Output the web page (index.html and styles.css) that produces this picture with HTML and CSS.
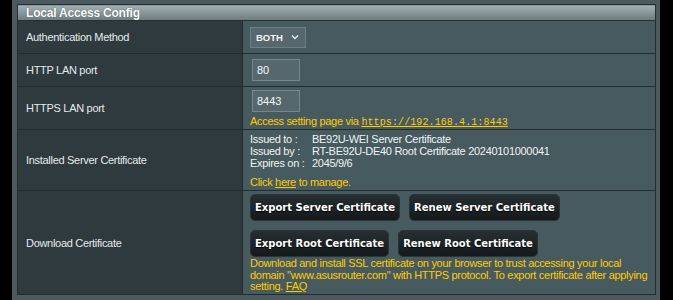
FILE: index.html
```html
<!DOCTYPE html>
<html lang="en">
<head>
    <meta charset="UTF-8">
    <meta name="viewport" content="width=device-width, initial-scale=1.0">
    <title>Local Access Config</title>
    <link rel="stylesheet" href="styles.css">
</head>
<body>
    <div id="moldura">
        <div class="faixa"></div>
        <div id="conteudo">
            <table class="tabela">
                <colgroup>
                    <col class="col-rotulo">
                    <col class="col-valor">
                </colgroup>
                <thead>
                    <tr><th colspan="2">Local Access Config</th></tr>
                </thead>
                <tbody>
                    <tr class="linha-1">
                        <td class="rotulo">Authentication Method</td>
                        <td class="valor">
                            <div class="seletor">
                                <span>BOTH</span>
                                <svg width="8" height="6" viewBox="0 0 8 6"><path d="M1 1.5 L4 4.5 L7 1.5" fill="none" stroke="#e6ecee" stroke-width="1.4"/></svg>
                            </div>
                        </td>
                    </tr>
                    <tr class="linha-2">
                        <td class="rotulo">HTTP LAN port</td>
                        <td class="valor"><div class="campo">80</div></td>
                    </tr>
                    <tr class="linha-3">
                        <td class="rotulo">HTTPS LAN port</td>
                        <td class="valor">
                            <div class="campo">8443</div>
                            <div class="aviso">Access setting page via <a class="url" href="#">https://192.168.4.1:8443</a></div>
                        </td>
                    </tr>
                    <tr class="linha-4">
                        <td class="rotulo">Installed Server Certificate</td>
                        <td class="valor">
                            <div class="certificado">
                                <span>Issued to :</span><span>BE92U-WEI Server Certificate</span>
                                <span>Issued by :</span><span>RT-BE92U-DE40 Root Certificate 20240101000041</span>
                                <span>Expires on :</span><span>2045/9/6</span>
                            </div>
                            <div class="aviso gerenciar">Click <a href="#">here</a> to manage.</div>
                        </td>
                    </tr>
                    <tr class="linha-5">
                        <td class="rotulo">Download Certificate</td>
                        <td class="valor">
                            <div class="botoes">
                                <button class="botao">Export Server Certificate</button>
                                <button class="botao">Renew Server Certificate</button>
                            </div>
                            <div class="botoes">
                                <button class="botao">Export Root Certificate</button>
                                <button class="botao">Renew Root Certificate</button>
                            </div>
                            <div class="aviso texto-longo">Download and install SSL certificate on your browser to trust accessing your local domain "www.asusrouter.com" with HTTPS protocol. To export certificate after applying setting. <a href="#">FAQ</a></div>
                        </td>
                    </tr>
                </tbody>
            </table>
        </div>
        <div class="faixa faixa-direita"></div>
    </div>
</body>
</html>
```

FILE: styles.css
```css
body {
    margin: 0;
    background-color: #000000;
    font-family: "Liberation Sans", Arial, sans-serif;
    color: #e8eef0;
}
#moldura {
    display: flex;
    height: 300px;
}
.faixa {
    width: 12px;
    background-color: #000000;
}
.faixa-direita {
    width: 13px;
}
#conteudo {
    width: 648px;
    background-color: #4c5a5f;
    padding: 4px 4px 0 5px;
    box-sizing: border-box;
}
.tabela {
    width: 639px;
    border-collapse: collapse;
    table-layout: fixed;
}
.col-rotulo {
    width: 225px;
}
.tabela th {
    height: 15px;
    padding: 0 0 0 8px;
    text-align: left;
    font-size: 12px;
    line-height: 14px;
    letter-spacing: -0.2px;
    font-weight: bold;
    color: #ffffff;
    text-shadow: 0 0 1px #3a464a;
    background: linear-gradient(#a3b0b4, #8a989d 45%, #6c7b80);
    border: 1px solid #27312f;
}
.tabela td {
    padding: 0;
    border: 1px solid #232c2f;
    font-size: 11px;
    letter-spacing: -0.3px;
    vertical-align: middle;
}
.tabela td.rotulo {
    padding-left: 8px;
    background-color: #2f3a3e;
    color: #e4eaec;
}
.tabela td.valor {
    padding-left: 7px;
    background-color: #475a5f;
}
.linha-1 td { height: 32px; }
.linha-2 td { height: 32px; }
.linha-3 td { height: 38px; }
.linha-4 td { height: 57px; }
.linha-5 td { height: 100px; }
.seletor {
    display: flex;
    align-items: center;
    justify-content: space-between;
    width: 56px;
    height: 21px;
    padding: 0 6px 0 5px;
    box-sizing: border-box;
    background-color: #56686d;
    border: 1px solid #6d7f84;
    font-size: 9.5px;
    font-weight: bold;
    letter-spacing: 0;
    color: #f2f6f7;
}
.campo {
    width: 48px;
    height: 22px;
    margin-left: 2px;
    padding-left: 4px;
    box-sizing: border-box;
    line-height: 20px;
    background-color: #56686d;
    border: 1px solid #76888d;
    font-size: 11px;
    letter-spacing: 0;
    color: #f4f8f9;
}
.tabela .linha-3 td.valor {
    vertical-align: top;
    padding-top: 3px;
}
.aviso {
    color: #ffcc00;
    line-height: 12px;
    margin-top: 3px;
}
.aviso a {
    color: #ffcc00;
}
.url {
    font-family: "Liberation Mono", "Courier New", monospace;
    font-size: 10px;
    letter-spacing: 0.1px;
}
.tabela .linha-4 td.valor {
    vertical-align: top;
    padding-top: 3px;
}
.certificado {
    display: grid;
    grid-template-columns: 62px auto;
    line-height: 12px;
    color: #eef3f4;
}
.gerenciar {
    margin-top: 7px;
}
.tabela .linha-5 td.valor {
    vertical-align: top;
    padding-top: 3px;
    padding-right: 6px;
}
.botoes {
    display: flex;
    gap: 9px;
    margin-bottom: 9px;
}
.botoes + .botoes {
    margin-bottom: 1px;
}
.botao {
    height: 27px;
    padding: 0 4px 1px 4px;
    border: 1px solid #2a3336;
    border-radius: 5px;
    background: linear-gradient(#262f33, #14191b);
    color: #ffffff;
    font-family: "DejaVu Sans", Verdana, sans-serif;
    font-size: 10px;
    font-weight: bold;
    letter-spacing: 0;
    white-space: nowrap;
    text-shadow: 0 1px 1px #000000;
}
.texto-longo {
    line-height: 11.5px;
    margin-top: 0;
}
```
